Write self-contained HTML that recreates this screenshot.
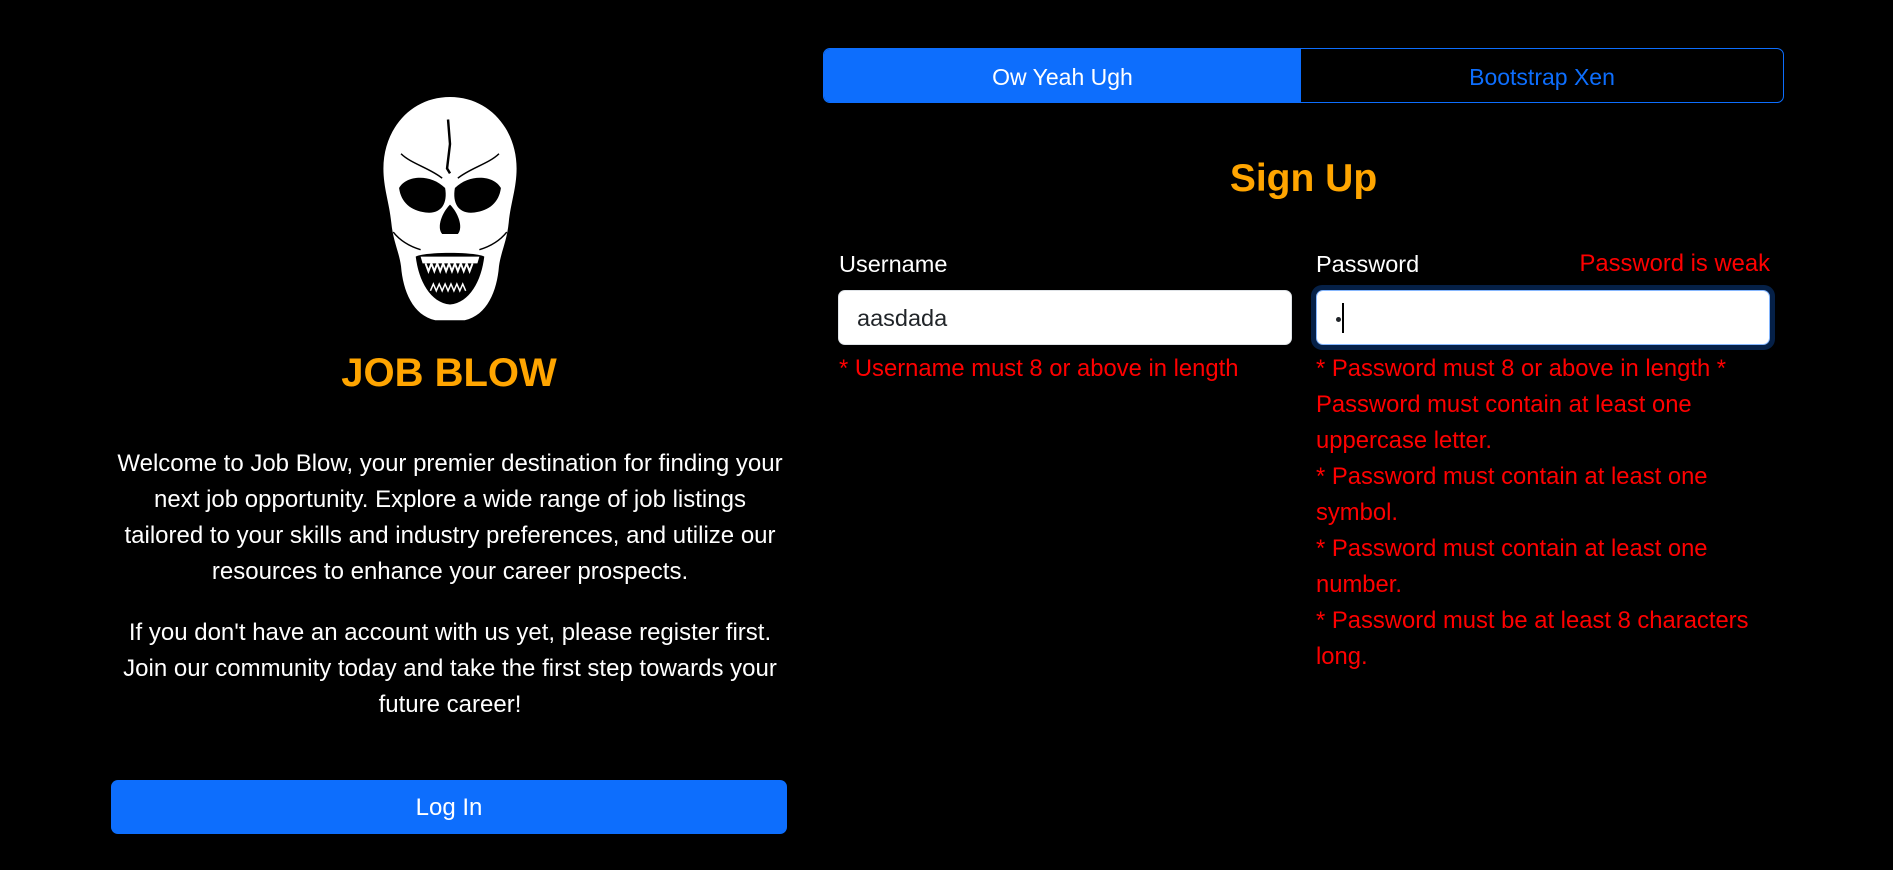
<!DOCTYPE html>
<html><head><meta charset="utf-8"><style>
*{box-sizing:border-box;margin:0;padding:0}
body{width:1893px;height:870px;background:#000;font-family:"Segoe UI","Liberation Sans",sans-serif;color:#fff;position:relative;overflow:hidden}
.a{position:absolute}
.c{text-align:center}
.err{color:#ff0000;font-size:23.8px;line-height:36px}
</style></head><body>
<svg class="a" style="left:370px;top:95px" width="160" height="235" viewBox="0 0 160 240">
<path d="M80 2 C120 2 148 35 148 75 C148 95 142 110 140 130 C138 150 132 160 130 175 C128 200 118 225 95 230 L65 230 C42 225 32 200 30 175 C28 160 22 150 20 130 C18 110 12 95 12 75 C12 35 40 2 80 2Z" fill="#fff"/>
<path d="M78 25 L80 50 L77 75 L80 80" stroke="#000" stroke-width="2.5" fill="none"/>
<path d="M28 95 C35 82 60 80 75 95 C78 112 70 122 55 120 C40 118 30 110 28 95Z" fill="#000"/>
<path d="M132 95 C125 82 100 80 85 95 C82 112 90 122 105 120 C120 118 130 110 132 95Z" fill="#000"/>
<path d="M80 112 C72 120 66 135 72 142 L88 142 C94 135 88 120 80 112Z" fill="#000"/>
<path d="M45 165 C55 160 105 160 115 165 C112 190 100 212 80 214 C60 212 48 190 45 165Z" fill="#000"/>
<path d="M50 165 L110 165 L108 172 L52 172Z" fill="#fff"/>
<path d="M55 172 l3 8 l3 -8 l3 8 l3-8 l3 8 l3-8 l3 8 l3-8 l3 8 l3-8 l3 8 l3-8 l3 8 l3-8 l3 8 l3-8" stroke="#fff" stroke-width="2" fill="none"/>
<path d="M60 200 l3 -7 l3 7 l3-7 l3 7 l3-7 l3 7 l3-7 l3 7 l3-7 l3 7 l3-7 l3 7" stroke="#fff" stroke-width="1.5" fill="none"/>
<path d="M30 60 C40 70 60 75 72 85 M130 60 C120 70 100 75 88 85 M22 140 C30 150 40 155 50 158 M138 140 C130 150 120 155 110 158" stroke="#000" stroke-width="1.5" fill="none"/>
</svg>
<div class="a c" style="left:111px;width:676px;top:347px;font-size:40px;font-weight:bold;color:#ffa500;line-height:52px">JOB BLOW</div>
<div class="a c" style="left:90px;width:720px;top:446px;font-size:24px;line-height:36px">Welcome to Job Blow, your premier destination for finding your<br>next job opportunity. Explore a wide range of job listings<br>tailored to your skills and industry preferences, and utilize our<br>resources to enhance your career prospects.</div>
<div class="a c" style="left:90px;width:720px;top:615px;font-size:24px;line-height:36px">If you don't have an account with us yet, please register first.<br>Join our community today and take the first step towards your<br>future career!</div>
<div class="a c" style="left:111px;top:780px;width:676px;height:54px;background:#0d6efd;border-radius:7px;font-size:24px;line-height:56px">Log In</div>

<div class="a" style="left:823px;top:48px;width:961px;height:55px;border:1.5px solid #0d6efd;border-radius:7px;overflow:hidden">
<div class="a c" style="left:0;top:0;width:477px;height:100%;background:#0d6efd;font-size:23px;line-height:56px">Ow Yeah Ugh</div>
<div class="a c" style="left:477px;top:0;width:482px;height:100%;color:#0d6efd;font-size:23px;line-height:56px">Bootstrap Xen</div>
</div>
<div class="a c" style="left:823px;width:961px;top:154px;font-size:39px;font-weight:bold;color:#ffa500;line-height:50px">Sign Up</div>
<div class="a" style="left:839px;top:248px;font-size:23.5px;line-height:32px">Username</div>
<div class="a" style="left:1316px;top:248px;font-size:23.5px;line-height:32px">Password</div>
<div class="a err" style="left:1480px;width:290px;text-align:right;top:248px;line-height:32px">Password is weak</div>
<div class="a" style="left:838px;top:290px;width:454px;height:55px;background:#fff;border:1px solid #dee2e6;border-radius:7px;color:#212529;font-size:23.5px;line-height:55px;padding-left:18px">aasdada</div>
<div class="a" style="left:1311px;top:285px;width:464px;height:65px;background:#052047;border-radius:11px"></div>
<div class="a" style="left:1316px;top:290px;width:454px;height:55px;background:#fff;border:1.5px solid #86b7fe;border-radius:7px"></div>
<div class="a" style="left:1336px;top:317px;width:5px;height:5px;border-radius:50%;background:#212529"></div>
<div class="a" style="left:1342px;top:303px;width:1.5px;height:30px;background:#000"></div>
<div class="a err" style="left:839px;top:351px">* Username must 8 or above in length</div>
<div class="a err" style="left:1316px;top:351px">* Password must 8 or above in length *<br>Password must contain at least one<br>uppercase letter.<br>* Password must contain at least one<br>symbol.<br>* Password must contain at least one<br>number.<br>* Password must be at least 8 characters<br>long.</div>
</body></html>
